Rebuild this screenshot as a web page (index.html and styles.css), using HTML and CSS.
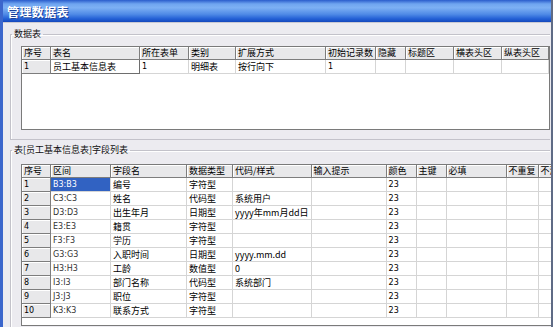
FILE: index.html
```html
<!DOCTYPE html>
<html lang="zh-CN">
<head>
    <meta charset="UTF-8">
    <title>管理数据表</title>
    <link rel="stylesheet" href="styles.css">
</head>
<body>
    <div class="window">
        <header class="titlebar">管理数据表</header>
        <div class="content">
            <fieldset class="group">
                <legend>数据表</legend>
                <div class="grid tables">
                    <table>
                        <colgroup>
                            <col style="width:29px"><col style="width:89px"><col style="width:49px"><col style="width:47px"><col style="width:90px">
                            <col style="width:49px"><col style="width:30px"><col style="width:48px"><col style="width:48px"><col style="width:47px">
                        </colgroup>
                        <tr class="head">
                            <th>序号</th><th>表名</th><th>所在表单</th><th>类别</th><th>扩展方式</th>
                            <th>初始记录数</th><th>隐藏</th><th>标题区</th><th>横表头区</th><th>纵表头区</th>
                        </tr>
                        <tr>
                            <th class="num">1</th><td class="focus">员工基本信息表</td><td class="num">1</td><td>明细表</td><td>按行向下</td>
                            <td class="num">1</td><td></td><td></td><td></td><td></td>
                        </tr>
                    </table>
                </div>
            </fieldset>

            <fieldset class="group fields">
                <legend>表[员工基本信息表]字段列表</legend>
                <div class="grid columns">
                    <table id="fieldTable">
                        <colgroup>
                            <col style="width:29px"><col style="width:60px"><col style="width:76px"><col style="width:46px"><col style="width:76px">
                            <col style="width:75px"><col style="width:30px"><col style="width:30px"><col style="width:60px"><col style="width:30px"><col style="width:40px">
                        </colgroup>
                        <tr class="head">
                            <th>序号</th><th>区间</th><th>字段名</th><th>数据类型</th><th>代码/样式</th>
                            <th>输入提示</th><th>颜色</th><th>主键</th><th>必填</th><th>不重复</th><th>不清</th>
                        </tr>
                    </table>
                </div>
            </fieldset>
        </div>
    </div>

    <script>
        // field rows of the table
        const fields = [
            ["B3:B3", "编号", "字符型", ""],
            ["C3:C3", "姓名", "代码型", "系统用户"],
            ["D3:D3", "出生年月", "日期型", "yyyy年mm月dd日"],
            ["E3:E3", "籍贯", "字符型", ""],
            ["F3:F3", "学历", "字符型", ""],
            ["G3:G3", "入职时间", "日期型", "yyyy.mm.dd"],
            ["H3:H3", "工龄", "数值型", "0"],
            ["I3:I3", "部门名称", "代码型", "系统部门"],
            ["J3:J3", "职位", "字符型", ""],
            ["K3:K3", "联系方式", "字符型", ""]
        ];

        const table = document.getElementById("fieldTable");
        fields.forEach((f, i) => {
            const row = document.createElement("tr");
            row.innerHTML =
                '<th class="num">' + (i + 1) + '</th>' +
                '<td class="range' + (i === 0 ? ' selected' : '') + '">' + f[0] + '</td>' +
                '<td>' + f[1] + '</td><td>' + f[2] + '</td><td>' + f[3] + '</td>' +
                '<td></td><td class="num">23</td><td></td><td></td><td></td><td></td>';
            table.appendChild(row);
        });
    </script>
</body>
</html>
```

FILE: styles.css
```css
body {
    margin: 0;
    width: 553px;
    height: 327px;
    overflow: hidden;
    font-family: "Noto Sans CJK SC", "DejaVu Sans", sans-serif;
    font-size: 9px;
    color: #000;
}
.window {
    box-sizing: border-box;
    height: 327px;
    display: flex;
    flex-direction: column;
    background: #ecebf0;
    border-left: 3px solid #3b66cc;
    border-right: 2px solid #5f6b85;
    overflow: hidden;
}
.titlebar {
    flex: none;
    height: 22px;
    display: flex;
    align-items: center;
    padding-left: 4px;
    color: #fff;
    font-size: 12px;
    font-weight: bold;
    letter-spacing: 0.4px;
    text-shadow: 1px 1px 0 #1a3f99;
    background: linear-gradient(to bottom, #2a5ccc 0%, #6fa5f0 18%, #7db0f4 35%, #4f8ae6 65%, #2461d6 85%, #1447bc 100%);
    border-bottom: 1px solid #c9c8d2;
}
.content {
    flex: 1;
    padding-left: 7px;
    min-height: 0;
}
.group {
    margin: 4px 1px 0 0;
    padding: 5px 0 9px 0;
    min-width: 0;
    border: 1px solid #c3c2ca;
    border-right: 0;
    box-shadow: inset 1px 1px 0 #fff;
}
.group legend {
    margin-left: 1px;
    padding: 0 2px;
    font-size: 9px;
    line-height: 14px;
    color: #111;
}
.fields {
    margin-top: 3px;
    padding-top: 7px;
}
.grid {
    margin-left: 10px;
    background: #fff;
    border: 1px solid #7a7a7a;
    overflow: hidden;
}
.tables {
    height: 82px;
}
.columns {
    height: 160px;
    margin-right: -3px;
}
table {
    table-layout: fixed;
    border-collapse: separate;
    border-spacing: 0;
    width: max-content;
}
th, td {
    padding: 0 2px;
    text-align: left;
    font-weight: normal;
    white-space: nowrap;
    overflow: hidden;
    line-height: 13px;
    border-right: 1px solid #d5d5d5;
    border-bottom: 1px solid #d5d5d5;
}
th {
    background: #e8e8ea;
    border-right-color: #7d7d7d;
    border-bottom-color: #7d7d7d;
    box-shadow: inset 1px 1px 0 #fff;
}
.head th {
    line-height: 12px;
}
.num, .range {
    font-family: "DejaVu Sans", sans-serif;
    font-size: 8px;
}
td.range {
    color: #333;
}
.selected {
    background: #3162c2;
    color: #fff !important;
}
.focus {
    border-right-color: #6e6e6e;
    border-bottom-color: #6e6e6e;
}
```
